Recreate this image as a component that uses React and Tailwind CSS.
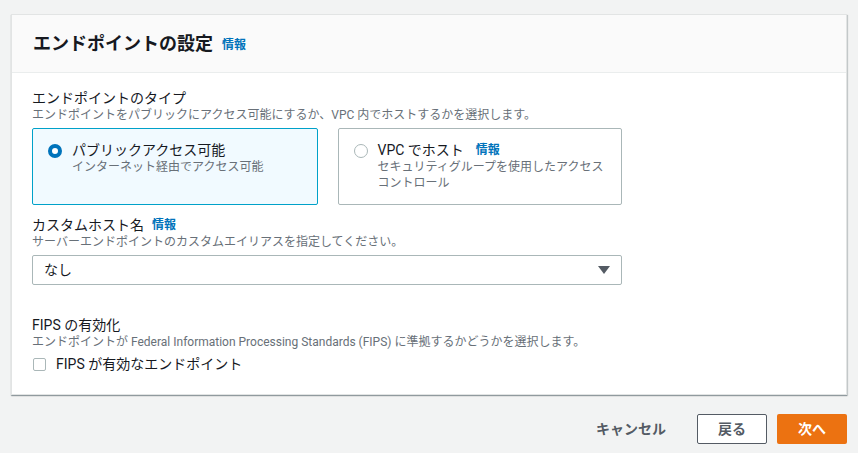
export default function App() {
  const font = { fontFamily: 'Roboto, "Noto Sans CJK JP", sans-serif' };
  return (
    <div className="w-[858px] h-[453px] bg-[#f2f3f3] pt-[14px] pl-[11px] overflow-hidden" style={font}>
      <div className="w-[836px] bg-white border border-[#e2e4e4] shadow-[0_1px_1px_0_rgba(0,28,36,0.3),1px_1px_1px_0_rgba(0,28,36,0.15)]">
        <div className="h-[58px] bg-[#fafafa] border-b border-[#eaeded] flex items-center pl-[21px] gap-[9px]">
          <h2 className="text-[18px] font-bold text-[#16191f] leading-none">エンドポイントの設定</h2>
          <span className="text-[12px] font-bold text-[#0073bb] leading-none mt-[2px]">情報</span>
        </div>
        <div className="px-[20px] pt-[16px] pb-[21px]">
          <div className="text-[14px] text-[#16191f] leading-[18px]">エンドポイントのタイプ</div>
          <div className="text-[12px] text-[#687078] leading-[16px]">エンドポイントをパブリックにアクセス可能にするか、VPC 内でホストするかを選択します。</div>
          <div className="flex gap-[20px] mt-[5px] w-[590px]">
            <div className="w-[286px] h-[77px] border border-[#00a1c9] bg-[#f1faff] rounded-[2px] flex pl-[15px] pt-[12px]">
              <div className="w-[14px] h-[14px] rounded-full border-[4px] border-[#0073bb] bg-white mt-[3px] shrink-0"></div>
              <div className="ml-[10px]">
                <div className="text-[14px] text-[#16191f] leading-[18px]">パブリックアクセス可能</div>
                <div className="text-[12px] text-[#687078] leading-[16px]">インターネット経由でアクセス可能</div>
              </div>
            </div>
            <div className="w-[285px] h-[77px] border border-[#aab7b8] bg-white rounded-[2px] flex pl-[15px] pt-[12px]">
              <div className="w-[14px] h-[14px] rounded-full border border-[#aab7b8] bg-white mt-[3px] shrink-0"></div>
              <div className="ml-[10px]">
                <div className="text-[14px] text-[#16191f] leading-[18px] flex items-center">
                  <span>VPC でホスト</span>
                  <span className="text-[12px] font-bold text-[#0073bb] ml-[12px]">情報</span>
                </div>
                <div className="text-[12px] text-[#687078] leading-[16px] w-[230px]">セキュリティグループを使用したアクセスコントロール</div>
              </div>
            </div>
          </div>
          <div className="mt-[11px] text-[14px] text-[#16191f] leading-[18px] flex items-center">
            <span>カスタムホスト名</span>
            <span className="text-[12px] font-bold text-[#0073bb] ml-[8px]">情報</span>
          </div>
          <div className="text-[12px] text-[#687078] leading-[16px]">サーバーエンドポイントのカスタムエイリアスを指定してください。</div>
          <div className="mt-[5px] w-[590px] h-[30px] border border-[#aab7b8] rounded-[2px] flex items-center justify-between pl-[11px] pr-[11px]">
            <span className="text-[14px] text-[#16191f]">なし</span>
            <svg width="12" height="8" viewBox="0 0 12 8"><path d="M0 0 L12 0 L6 8 Z" fill="#545b64" /></svg>
          </div>
          <div className="mt-[31px] text-[14px] text-[#16191f] leading-[18px]">FIPS の有効化</div>
          <div className="text-[12px] text-[#687078] leading-[16px]">エンドポイントが Federal Information Processing Standards (FIPS) に準拠するかどうかを選択します。</div>
          <div className="flex items-center mt-[5px]">
            <div className="w-[13px] h-[13px] border border-[#aab7b8] rounded-[2px] bg-white ml-[1px]"></div>
            <span className="ml-[10px] text-[14px] text-[#16191f] leading-[18px]">FIPS が有効なエンドポイント</span>
          </div>
        </div>
      </div>
      <div className="flex justify-end items-center w-[836px] mt-[19px] gap-[10px]">
        <span className="text-[14px] font-bold text-[#545b64] mr-[21px]">キャンセル</span>
        <div className="w-[70px] h-[30px] border border-[#545b64] rounded-[2px] bg-white flex items-center justify-center text-[14px] font-bold text-[#545b64]">戻る</div>
        <div className="w-[70px] h-[30px] rounded-[2px] bg-[#ec7211] flex items-center justify-center text-[14px] font-bold text-white">次へ</div>
      </div>
    </div>
  );
}
